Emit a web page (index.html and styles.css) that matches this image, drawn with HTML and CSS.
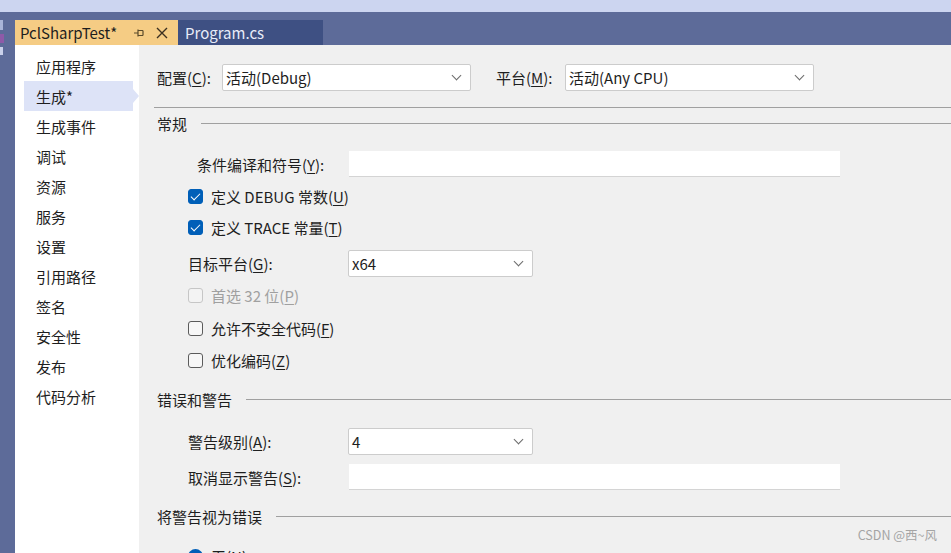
FILE: index.html
```html
<!DOCTYPE html>
<html lang="zh-CN">
<head>
<meta charset="utf-8">
<title>PclSharpTest</title>
<link rel="stylesheet" href="styles.css">
</head>
<body>
<div class="topbar"></div>
<div class="main">
  <div class="strip">
    <span class="g g1"></span>
    <span class="g g2"></span>
    <span class="g g3"></span>
  </div>
  <div class="doc">
    <div class="tabs">
      <div class="tab active">
        <span class="tab-title">PclSharpTest*</span>
        <svg class="pin" width="10" height="10" viewBox="0 0 10 10"><path d="M0 5h4M4 1.5v7M4 2.5h5M4 7.5h5M9 2.5v5" stroke="#5a4a2a" stroke-width="1.2" fill="none"/></svg>
        <svg class="close" width="12" height="12" viewBox="0 0 12 12"><path d="M1 1L11 11M11 1L1 11" stroke="#3c3020" stroke-width="1.4"/></svg>
      </div>
      <div class="tab other"><span class="tab-title">Program.cs</span></div>
    </div>
    <div class="tabline"></div>
    <div class="body">
      <nav class="side">
        <div class="nav-item">应用程序</div>
        <div class="nav-item selected">生成*</div>
        <div class="nav-item">生成事件</div>
        <div class="nav-item">调试</div>
        <div class="nav-item">资源</div>
        <div class="nav-item">服务</div>
        <div class="nav-item">设置</div>
        <div class="nav-item">引用路径</div>
        <div class="nav-item">签名</div>
        <div class="nav-item">安全性</div>
        <div class="nav-item">发布</div>
        <div class="nav-item">代码分析</div>
      </nav>
      <main class="content">
        <div class="toprow">
          <span class="lbl-cfg">配置(<u>C</u>):</span>
          <div class="select wide"><span>活动(Debug)</span><i class="chev"></i></div>
          <span class="lbl-plat">平台(<u>M</u>):</span>
          <div class="select wide"><span>活动(Any CPU)</span><i class="chev"></i></div>
        </div>
        <div class="hr"></div>

        <div class="section s1"><span>常规</span><div class="line"></div></div>
        <div class="row r-sym">
          <span class="lbl lbl-sym">条件编译和符号(<u>Y</u>):</span>
          <div class="input"></div>
        </div>
        <div class="row chk r-debug"><span class="box checked"></span><span>定义 DEBUG 常数(<u>U</u>)</span></div>
        <div class="row chk r-trace"><span class="box checked"></span><span>定义 TRACE 常量(<u>T</u>)</span></div>
        <div class="row r-target">
          <span class="lbl">目标平台(<u>G</u>):</span>
          <div class="select narrow"><span>x64</span><i class="chev"></i></div>
        </div>
        <div class="row chk disabled r-p32"><span class="box"></span><span>首选 32 位(<u>P</u>)</span></div>
        <div class="row chk r-unsafe"><span class="box"></span><span>允许不安全代码(<u>F</u>)</span></div>
        <div class="row chk r-opt"><span class="box"></span><span>优化编码(<u>Z</u>)</span></div>

        <div class="section s2"><span>错误和警告</span><div class="line"></div></div>
        <div class="row r-warn">
          <span class="lbl">警告级别(<u>A</u>):</span>
          <div class="select narrow"><span>4</span><i class="chev"></i></div>
        </div>
        <div class="row r-sup">
          <span class="lbl">取消显示警告(<u>S</u>):</span>
          <div class="input"></div>
        </div>

        <div class="section s3"><span>将警告视为错误</span><div class="line"></div></div>
        <div class="row chk r-radio"><span class="radio"></span><span>无(<u>N</u>)</span></div>
      </main>
    </div>
  </div>
</div>
<div class="watermark">CSDN @西~风</div>
</body>
</html>
```
FILE: styles.css
```css
* { box-sizing: border-box; }
html, body {
  margin: 0;
  padding: 0;
}
body {
  width: 951px;
  height: 553px;
  overflow: hidden;
  background: #5d6b99;
  font-family: "Noto Sans CJK SC", "Noto Sans", sans-serif;
  font-size: 15px;
  color: #1e1e1e;
  position: relative;
}
u { text-decoration: underline; text-underline-offset: 2px; text-decoration-thickness: 1px; }

.topbar {
  height: 12px;
  background: #ccd5f0;
}
.main {
  display: flex;
  height: 541px;
}
.strip {
  width: 15px;
  flex: none;
  display: flex;
  flex-direction: column;
  padding-top: 8px;
  gap: 4px;
}
.g { display: block; width: 4px; background: #e6e9f4; }
.g1 { height: 10px; width: 3px; background: #a9b4d8; }
.g2 { height: 9px; width: 4px; background: #8e5aa8; }
.g3 { height: 8px; width: 3px; background: #c9d0ea; }

.doc {
  flex: 1;
  display: flex;
  flex-direction: column;
  min-width: 0;
}
.tabs {
  height: 33px;
  padding-top: 8px;
  display: flex;
}
.tab {
  height: 25px;
  display: flex;
  align-items: center;
  padding-left: 5px;
  line-height: 1;
}
.tab.active {
  width: 163px;
  background: #f5cc84;
  color: #1e1e1e;
}
.tab.other {
  width: 145px;
  background: #3e5083;
  color: #e8ecf8;
  padding-left: 7px;
}
.tab-title { font-size: 15px; }
.pin { margin-left: 17px; }
.close { margin-left: 12px; }

.tabline {
  height: 2px;
  background: #f5cc84;
}
.body {
  flex: 1;
  display: flex;
  background: #f0f0f0;
}
.side {
  width: 124px;
  flex: none;
  background: #ffffff;
  padding: 6px 0 0 9px;
}
.nav-item {
  height: 30px;
  width: 109px;
  display: flex;
  align-items: center;
  padding-left: 12px;
  position: relative;
}
.nav-item.selected {
  background: #dde3f7;
}
.nav-item.selected::after {
  content: "";
  position: absolute;
  right: -6px;
  top: 8px;
  border-left: 6px solid #dde3f7;
  border-top: 7px solid transparent;
  border-bottom: 7px solid transparent;
}

.content {
  flex: 1;
  min-width: 0;
  padding-top: 19px;
  display: flex;
  flex-direction: column;
}
.toprow {
  display: flex;
  align-items: center;
  height: 27px;
  padding-left: 18px;
}
.lbl-cfg { width: 65px; }
.lbl-plat { margin-left: 25px; width: 69px; }
.select {
  height: 27px;
  background: #ffffff;
  border: 1px solid #cccccc;
  border-radius: 2px;
  display: flex;
  align-items: center;
  justify-content: space-between;
  padding: 0 10px 0 3px;
}
.select.wide { width: 249px; }
.select.narrow { width: 185px; padding-left: 3px; }
.chev {
  width: 7px;
  height: 7px;
  border-right: 1px solid #6b6b6b;
  border-bottom: 1px solid #6b6b6b;
  transform: rotate(45deg);
  margin-top: -4px;
}
.hr {
  margin: 16px 0 0 15px;
  height: 1px;
  background: #a0a0a0;
}
.section {
  display: flex;
  align-items: center;
  height: 20px;
  padding-left: 18px;
}
.section .line {
  flex: 1;
  height: 1px;
  background: #a0a0a0;
  margin-left: 14px;
}
.s1 { margin-top: 5px; }
.s2 { margin-top: 18px; }
.s3 { margin-top: 16px; }

.row {
  display: flex;
  align-items: center;
  padding-left: 49px;
}
.lbl { width: 160px; flex: none; }
.lbl-sym { width: 152px; padding-left: 0; }
.r-sym { padding-left: 58px; height: 26px; margin-top: 18px; }
.input {
  width: 491px;
  height: 26px;
  background: #ffffff;
  border-bottom: 1px solid #d4d4d4;
}
.chk { height: 22px; gap: 8px; }
.box {
  width: 15px;
  height: 15px;
  border: 1px solid #5b5b5b;
  border-radius: 3px;
  background: #f7f7f7;
  flex: none;
  position: relative;
}
.box.checked {
  background: #005fb8;
  border-color: #005fb8;
}
.box.checked::after {
  content: "";
  position: absolute;
  left: 4px;
  top: 1px;
  width: 4px;
  height: 8px;
  border-right: 1.5px solid #ffffff;
  border-bottom: 1.5px solid #ffffff;
  transform: rotate(45deg);
}
.disabled { color: #a0a0a0; }
.disabled .box { border-color: #c6c6c6; background: #f3f3f3; }
.radio {
  width: 15px;
  height: 15px;
  border-radius: 50%;
  background: #005fb8;
  flex: none;
}
.r-debug { margin-top: 8px; }
.r-trace { margin-top: 9px; }
.r-target { height: 26px; margin-top: 12px; }
.r-target .select { height: 27px; margin-left: 0; }
.r-p32 { margin-top: 8px; }
.r-unsafe { margin-top: 11px; }
.r-opt { margin-top: 10px; }
.r-warn { height: 27px; margin-top: 19px; }
.r-sup { height: 26px; margin-top: 9px; }
.r-sup .input { margin-left: 1px; }
.r-radio { margin-top: 19px; }

.watermark {
  position: absolute;
  right: 14px;
  bottom: 9px;
  font-size: 12.5px;
  color: #a4a4a4;
  font-family: "Noto Sans CJK SC", "Noto Sans", sans-serif;
}
```
